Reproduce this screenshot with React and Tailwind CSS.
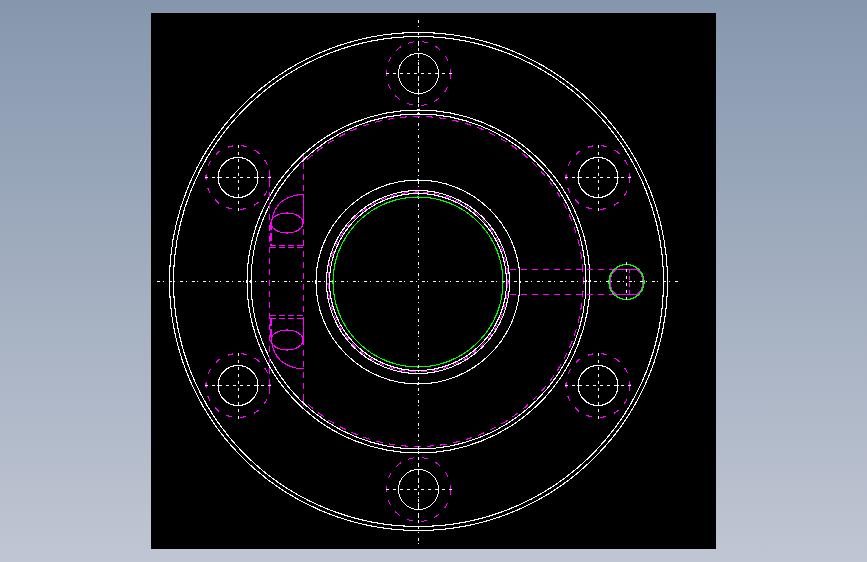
const WHITE = '#ffffff'
const MAGENTA = '#ff00ff'
const GREEN = '#00ff00'

const CX = 418.5
const CY = 281.5
const BORE_X = 418
const BORE_Y = 282
const CENTER_DASH = '3 2.5 1 5'
const BOLT_DASH = '3 4'
const BOLTS = [
  [418.5, 73.5],
  [238, 177.5],
  [598, 177.5],
  [238, 385.5],
  [598, 385.5],
  [418.5, 489.5],
]

function CenterLines({ x, y, size }) {
  return (
    <g stroke={WHITE} strokeDasharray={BOLT_DASH} fill="none" strokeWidth="1">
      <line x1={x - size} y1={y} x2={x + size} y2={y} />
      <line x1={x} y1={y - size} x2={x} y2={y + size} />
    </g>
  )
}

function Drawing() {
  return (
    <svg viewBox="151 13 565 536" className="block w-[565px] h-[536px]" shapeRendering="crispEdges" fill="none" strokeWidth="1.1">
      {/* hidden circle, cut off at the slot */}
      <path d="M303.5 155 L303.5 163 A165 165 0 1 1 303.5 400 L303.5 406" stroke={MAGENTA} strokeDasharray="7 6" />

      {/* flange outlines */}
      <g stroke={WHITE}>
        <circle cx={CX} cy={CY} r="249" />
        <circle cx={CX} cy={CY} r="245" />
        <circle cx={CX} cy={CY} r="171.5" />
        <circle cx={CX} cy={CY} r="167.5" />
        <circle cx={BORE_X} cy={BORE_Y} r="102" />
        <circle cx={BORE_X} cy={BORE_Y} r="91.5" />
        <circle cx={BORE_X} cy={BORE_Y} r="88.5" />
      </g>
      <circle cx={BORE_X} cy={BORE_Y} r="90" stroke={MAGENTA} strokeDasharray="6 5" />
      <circle cx={BORE_X} cy={BORE_Y} r="85" stroke={GREEN} />

      {/* bolt holes */}
      {BOLTS.map(([x, y]) => (
        <g key={`${x}-${y}`}>
          <circle cx={x} cy={y} r="32" stroke={MAGENTA} strokeDasharray="6 8" />
          <circle cx={x} cy={y} r="20" stroke={WHITE} />
          <CenterLines x={x} y={y} size={33} />
        </g>
      ))}

      {/* left slot */}
      <g stroke={MAGENTA}>
        <line x1="303.5" y1="163" x2="303.5" y2="400" strokeWidth="1" strokeDasharray="6 5" />
        <line x1="269.5" y1="170" x2="269.5" y2="394" strokeWidth="1" strokeDasharray="6 5" />
        <ellipse cx="287" cy="223" rx="16" ry="10" />
        <ellipse cx="287" cy="340" rx="16" ry="10" />
        <path d="M303.5 194.5 C287 195 274 203 271.5 222" />
        <path d="M303.5 369 C287 368 274 360 271.5 341" />
        <line x1="303.5" y1="194" x2="303.5" y2="223" strokeWidth="1" />
        <line x1="303.5" y1="318" x2="303.5" y2="340" strokeWidth="1" />
        <line x1="271" y1="222" x2="271" y2="246" strokeWidth="2" strokeDasharray="8 3" />
        <line x1="271" y1="318" x2="271" y2="342" strokeWidth="2" strokeDasharray="8 3" />
        <line x1="270" y1="245.5" x2="303" y2="245.5" strokeWidth="1" strokeDasharray="6 3" />
        <line x1="270" y1="247.5" x2="303" y2="247.5" strokeWidth="1" strokeDasharray="6 3" />
        <line x1="270" y1="315.5" x2="303" y2="315.5" strokeWidth="1" strokeDasharray="6 3" />
        <line x1="270" y1="318.5" x2="303" y2="318.5" strokeWidth="1" strokeDasharray="6 3" />
      </g>

      {/* side port */}
      <g stroke={MAGENTA}>
        <line x1="510" y1="269.5" x2="616" y2="269.5" strokeWidth="1" strokeDasharray="6 5" />
        <line x1="510" y1="294.5" x2="616" y2="294.5" strokeWidth="1" strokeDasharray="6 5" />
        <path d="M616 269.5 L637 269.5 A16 16 0 0 1 637 294.5 L616 294.5 A16 16 0 0 1 616 269.5 Z" />
        <line x1="629.5" y1="269" x2="629.5" y2="294" strokeWidth="1" strokeDasharray="4 3" />
      </g>
      <circle cx="626.5" cy="282" r="17.5" stroke={GREEN} strokeWidth="1.4" />
      <line x1="626.5" y1="262" x2="626.5" y2="301" stroke={WHITE} strokeWidth="1" strokeDasharray={BOLT_DASH} />

      {/* main centre lines */}
      <g stroke={WHITE} strokeWidth="1" strokeDasharray={CENTER_DASH}>
        <line x1="157" y1={CY} x2="680" y2={CY} />
        <line x1={CX} y1="20" x2={CX} y2="545" />
      </g>
    </svg>
  )
}

export default function App() {
  return (
    <div className="flex items-center justify-center w-[867px] h-[562px] bg-gradient-to-b from-[#8697ad] to-[#c0c6d3]">
      <div className="bg-black">
        <Drawing />
      </div>
    </div>
  )
}
